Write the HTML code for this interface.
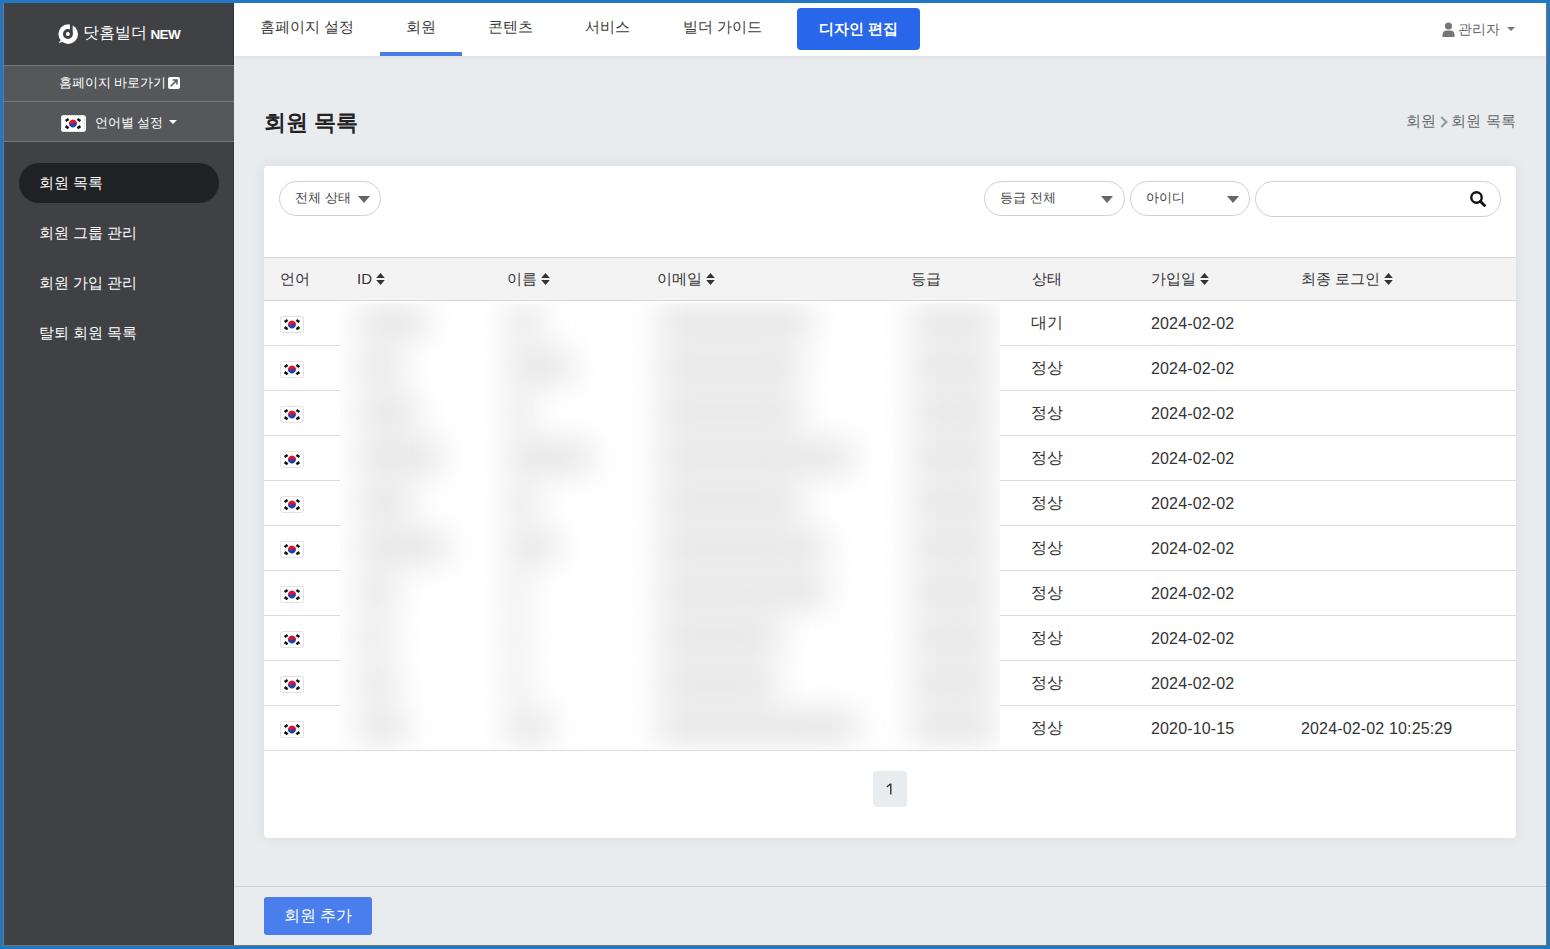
<!DOCTYPE html>
<html><head><meta charset="utf-8">
<style>
*{box-sizing:border-box;margin:0;padding:0}
html,body{width:1550px;height:949px;overflow:hidden;background:#1f78c1;font-family:"Liberation Sans",sans-serif;}
.abs{position:absolute;white-space:nowrap}
#win{position:absolute;left:3px;top:3px;width:1544px;height:943px;background:#e9ecef;overflow:hidden;border-right:1px solid #77736f;border-bottom:1px solid #77736f}
#side{position:absolute;left:0;top:0;width:231px;height:943px;background:#404145;border-left:1px solid #7b7570;border-right:1px solid #333438}
#main{position:absolute;left:231px;top:0;width:1313px;height:943px}
#nav{position:absolute;left:231px;top:0;width:1312px;height:53px;background:#fff;box-shadow:0 1px 5px rgba(0,0,0,0.06)}
.nv{font-size:15px;line-height:20px;color:#3a3a3a;top:13.5px}
.mi{font-size:15px;line-height:20px;color:#fff;left:35px}
.pill{border:1px solid #d0d0d0;border-radius:18px;background:#fff}
.ft{font-size:13px;line-height:20px;color:#444}
.th{font-size:15px;line-height:20px;color:#333}
.td{font-size:16px;line-height:20px;color:#333}
.dt{letter-spacing:0.15px}
.sort{display:inline-block;margin-left:4px;vertical-align:-1px}
</style></head>
<body>
<div id="win">
  <div id="side">
    <div class="abs" style="left:54px;top:21px;width:21px;height:21px">
      <svg width="21" height="21" viewBox="0 0 21 21"><circle cx="10.2" cy="10.1" r="9.8" fill="#fff"/><path d="M3.2 15.5 L0.6 19 L5.4 17.8Z" fill="#fff"/><circle cx="9.9" cy="10" r="3.5" fill="none" stroke="#404145" stroke-width="2.9"/><rect x="11.9" y="0" width="2.8" height="10.5" fill="#404145"/></svg>
    </div>
    <div class="abs" style="left:79px;top:20px;font-size:16px;line-height:20px;color:#fff">닷홈빌더 <span style="font-size:13.5px;font-weight:bold;letter-spacing:-0.6px;vertical-align:-1px;margin-left:-1px">NEW</span></div>
    <div class="abs" style="left:0;top:62px;width:230px;height:77px;background:#56575b;border-top:1px solid #77787b;border-bottom:1px solid #77787b"></div>
    <div class="abs" style="left:0;top:98px;width:230px;height:1px;background:#77787b"></div>
    <div class="abs" style="left:55px;top:70px;font-size:12.5px;line-height:20px;color:#fff">홈페이지 바로가기</div>
    <div class="abs" style="left:164px;top:74px;width:12px;height:12px;background:#fff;border-radius:2px"><svg width="12" height="12" style="position:absolute;left:0;top:0"><path d="M2.8 9.2 L8.6 3.4 M4.6 3 H9 V7.4" stroke="#56575b" stroke-width="1.5" fill="none"/></svg></div>
    <div class="abs" style="left:57px;top:112px;width:25px;height:17px;background:#fff;border-radius:3px;overflow:hidden"><svg width="24" height="17" viewBox="0 0 24 17"><rect x="0.5" y="0.5" width="23" height="16" rx="2" fill="#fff" stroke="#e2e2e2"/>
<g transform="rotate(33.7 12 8.5)"><path d="M8.2 8.5 A3.8 3.8 0 0 1 15.8 8.5 Z" fill="#e8102a"/><path d="M8.2 8.5 A3.8 3.8 0 0 0 15.8 8.5 Z" fill="#1747b5"/><circle cx="10.1" cy="8.5" r="1.9" fill="#e8102a"/><circle cx="13.9" cy="8.5" r="1.9" fill="#1747b5"/></g>
<g fill="#111"><rect x="4.8" y="3.2" width="2.6" height="3.6" transform="rotate(56 6.1 5)"/><rect x="16.6" y="3.2" width="2.6" height="3.6" transform="rotate(-56 17.9 5)"/><rect x="4.8" y="10.4" width="2.6" height="3.6" transform="rotate(-56 6.1 12.2)"/><rect x="16.6" y="10.4" width="2.6" height="3.6" transform="rotate(56 17.9 12.2)"/></g></svg></div>
    <div class="abs" style="left:91px;top:110px;font-size:12.5px;line-height:20px;color:#fff">언어별 설정</div>
    <svg class="abs" style="left:165px;top:117px" width="8" height="4" viewBox="0 0 8 4"><path d="M0 0H8L4.0 4Z" fill="#fff"/></svg>
    <div class="abs" style="left:15px;top:160px;width:200px;height:40px;border-radius:20px;background:#202124"></div>
    <div class="abs mi" style="top:170px">회원 목록</div>
    <div class="abs mi" style="top:220px">회원 그룹 관리</div>
    <div class="abs mi" style="top:270px">회원 가입 관리</div>
    <div class="abs mi" style="top:320px">탈퇴 회원 목록</div>
  </div>
  <div id="main">
    <div class="abs" style="left:30px;top:105px;font-size:22px;line-height:30px;font-weight:bold;color:#222">회원 목록</div>
    <div class="abs" style="left:1172px;top:108px;font-size:15px;line-height:20px;color:#666">회원 <span style="display:inline-block;width:8px;height:8px;border-right:2px solid #9a9a9a;border-top:2px solid #9a9a9a;transform:rotate(45deg);margin:0 1px 0 -2px;vertical-align:0px"></span> 회원 목록</div>
    <div id="card" class="abs" style="left:30px;top:163px;width:1252px;height:672px;background:#fff;border-radius:4px;box-shadow:0 0 14px rgba(0,0,0,0.07)">
<div class="abs pill" style="left:15px;top:15px;width:102px;height:35px"><span class="abs ft" style="left:15px;top:6px">전체 상태</span><svg class="abs" style="left:78px;top:14px" width="12" height="7" viewBox="0 0 12 7"><path d="M0 0H12L6.0 7Z" fill="#666"/></svg></div>
<div class="abs pill" style="left:720px;top:15px;width:141px;height:35px"><span class="abs ft" style="left:15px;top:6px">등급 전체</span><svg class="abs" style="left:116px;top:14px" width="12" height="7" viewBox="0 0 12 7"><path d="M0 0H12L6.0 7Z" fill="#666"/></svg></div>
<div class="abs pill" style="left:866px;top:15px;width:120px;height:35px"><span class="abs ft" style="left:15px;top:6px">아이디</span><svg class="abs" style="left:96px;top:14px" width="12" height="7" viewBox="0 0 12 7"><path d="M0 0H12L6.0 7Z" fill="#666"/></svg></div>
<div class="abs pill" style="left:991px;top:15px;width:246px;height:36px"><svg class="abs" style="left:213px;top:8px" width="18" height="18" viewBox="0 0 18 18"><circle cx="7.5" cy="7.5" r="5.2" fill="none" stroke="#111" stroke-width="2.4"/><path d="M11.3 11.3 L15.5 15.5" stroke="#111" stroke-width="2.8" stroke-linecap="round"/></svg></div>
<div class="abs" style="left:0;top:91px;width:1252px;height:44px;background:#f3f3f3;border-top:1px solid #d6d6d6;border-bottom:1px solid #d6d6d6"></div>
<div class="abs th" style="left:16px;top:103px">언어</div>
<div class="abs th" style="left:93px;top:103px">ID<svg class="sort" width="9" height="12" viewBox="0 0 9 12"><path d="M4.5 0 L8.8 4.9 H0.2Z M0.2 7 H8.8 L4.5 12Z" fill="#333"/></svg></div>
<div class="abs th" style="left:243px;top:103px">이름<svg class="sort" width="9" height="12" viewBox="0 0 9 12"><path d="M4.5 0 L8.8 4.9 H0.2Z M0.2 7 H8.8 L4.5 12Z" fill="#333"/></svg></div>
<div class="abs th" style="left:393px;top:103px">이메일<svg class="sort" width="9" height="12" viewBox="0 0 9 12"><path d="M4.5 0 L8.8 4.9 H0.2Z M0.2 7 H8.8 L4.5 12Z" fill="#333"/></svg></div>
<div class="abs th" style="left:647px;top:103px">등급</div>
<div class="abs th" style="left:768px;top:103px">상태</div>
<div class="abs th" style="left:887px;top:103px">가입일<svg class="sort" width="9" height="12" viewBox="0 0 9 12"><path d="M4.5 0 L8.8 4.9 H0.2Z M0.2 7 H8.8 L4.5 12Z" fill="#333"/></svg></div>
<div class="abs th" style="left:1037px;top:103px">최종 로그인<svg class="sort" width="9" height="12" viewBox="0 0 9 12"><path d="M4.5 0 L8.8 4.9 H0.2Z M0.2 7 H8.8 L4.5 12Z" fill="#333"/></svg></div>
<div class="abs" style="left:16px;top:150px;width:24px;height:17px"><svg width="24" height="17" viewBox="0 0 24 17"><rect x="0.5" y="0.5" width="23" height="16" rx="2" fill="#fff" stroke="#e2e2e2"/>
<g transform="rotate(33.7 12 8.5)"><path d="M8.2 8.5 A3.8 3.8 0 0 1 15.8 8.5 Z" fill="#e8102a"/><path d="M8.2 8.5 A3.8 3.8 0 0 0 15.8 8.5 Z" fill="#1747b5"/><circle cx="10.1" cy="8.5" r="1.9" fill="#e8102a"/><circle cx="13.9" cy="8.5" r="1.9" fill="#1747b5"/></g>
<g fill="#111"><rect x="4.8" y="3.2" width="2.6" height="3.6" transform="rotate(56 6.1 5)"/><rect x="16.6" y="3.2" width="2.6" height="3.6" transform="rotate(-56 17.9 5)"/><rect x="4.8" y="10.4" width="2.6" height="3.6" transform="rotate(-56 6.1 12.2)"/><rect x="16.6" y="10.4" width="2.6" height="3.6" transform="rotate(56 17.9 12.2)"/></g></svg></div>
<div class="abs td" style="left:767px;top:147px">대기</div>
<div class="abs td dt" style="left:887px;top:148px">2024-02-02</div>
<div class="abs" style="left:0;width:1252px;top:179px;height:1px;background:#dcdcdc"></div>
<div class="abs" style="left:16px;top:195px;width:24px;height:17px"><svg width="24" height="17" viewBox="0 0 24 17"><rect x="0.5" y="0.5" width="23" height="16" rx="2" fill="#fff" stroke="#e2e2e2"/>
<g transform="rotate(33.7 12 8.5)"><path d="M8.2 8.5 A3.8 3.8 0 0 1 15.8 8.5 Z" fill="#e8102a"/><path d="M8.2 8.5 A3.8 3.8 0 0 0 15.8 8.5 Z" fill="#1747b5"/><circle cx="10.1" cy="8.5" r="1.9" fill="#e8102a"/><circle cx="13.9" cy="8.5" r="1.9" fill="#1747b5"/></g>
<g fill="#111"><rect x="4.8" y="3.2" width="2.6" height="3.6" transform="rotate(56 6.1 5)"/><rect x="16.6" y="3.2" width="2.6" height="3.6" transform="rotate(-56 17.9 5)"/><rect x="4.8" y="10.4" width="2.6" height="3.6" transform="rotate(-56 6.1 12.2)"/><rect x="16.6" y="10.4" width="2.6" height="3.6" transform="rotate(56 17.9 12.2)"/></g></svg></div>
<div class="abs td" style="left:767px;top:192px">정상</div>
<div class="abs td dt" style="left:887px;top:193px">2024-02-02</div>
<div class="abs" style="left:0;width:1252px;top:224px;height:1px;background:#dcdcdc"></div>
<div class="abs" style="left:16px;top:240px;width:24px;height:17px"><svg width="24" height="17" viewBox="0 0 24 17"><rect x="0.5" y="0.5" width="23" height="16" rx="2" fill="#fff" stroke="#e2e2e2"/>
<g transform="rotate(33.7 12 8.5)"><path d="M8.2 8.5 A3.8 3.8 0 0 1 15.8 8.5 Z" fill="#e8102a"/><path d="M8.2 8.5 A3.8 3.8 0 0 0 15.8 8.5 Z" fill="#1747b5"/><circle cx="10.1" cy="8.5" r="1.9" fill="#e8102a"/><circle cx="13.9" cy="8.5" r="1.9" fill="#1747b5"/></g>
<g fill="#111"><rect x="4.8" y="3.2" width="2.6" height="3.6" transform="rotate(56 6.1 5)"/><rect x="16.6" y="3.2" width="2.6" height="3.6" transform="rotate(-56 17.9 5)"/><rect x="4.8" y="10.4" width="2.6" height="3.6" transform="rotate(-56 6.1 12.2)"/><rect x="16.6" y="10.4" width="2.6" height="3.6" transform="rotate(56 17.9 12.2)"/></g></svg></div>
<div class="abs td" style="left:767px;top:237px">정상</div>
<div class="abs td dt" style="left:887px;top:238px">2024-02-02</div>
<div class="abs" style="left:0;width:1252px;top:269px;height:1px;background:#dcdcdc"></div>
<div class="abs" style="left:16px;top:285px;width:24px;height:17px"><svg width="24" height="17" viewBox="0 0 24 17"><rect x="0.5" y="0.5" width="23" height="16" rx="2" fill="#fff" stroke="#e2e2e2"/>
<g transform="rotate(33.7 12 8.5)"><path d="M8.2 8.5 A3.8 3.8 0 0 1 15.8 8.5 Z" fill="#e8102a"/><path d="M8.2 8.5 A3.8 3.8 0 0 0 15.8 8.5 Z" fill="#1747b5"/><circle cx="10.1" cy="8.5" r="1.9" fill="#e8102a"/><circle cx="13.9" cy="8.5" r="1.9" fill="#1747b5"/></g>
<g fill="#111"><rect x="4.8" y="3.2" width="2.6" height="3.6" transform="rotate(56 6.1 5)"/><rect x="16.6" y="3.2" width="2.6" height="3.6" transform="rotate(-56 17.9 5)"/><rect x="4.8" y="10.4" width="2.6" height="3.6" transform="rotate(-56 6.1 12.2)"/><rect x="16.6" y="10.4" width="2.6" height="3.6" transform="rotate(56 17.9 12.2)"/></g></svg></div>
<div class="abs td" style="left:767px;top:282px">정상</div>
<div class="abs td dt" style="left:887px;top:283px">2024-02-02</div>
<div class="abs" style="left:0;width:1252px;top:314px;height:1px;background:#dcdcdc"></div>
<div class="abs" style="left:16px;top:330px;width:24px;height:17px"><svg width="24" height="17" viewBox="0 0 24 17"><rect x="0.5" y="0.5" width="23" height="16" rx="2" fill="#fff" stroke="#e2e2e2"/>
<g transform="rotate(33.7 12 8.5)"><path d="M8.2 8.5 A3.8 3.8 0 0 1 15.8 8.5 Z" fill="#e8102a"/><path d="M8.2 8.5 A3.8 3.8 0 0 0 15.8 8.5 Z" fill="#1747b5"/><circle cx="10.1" cy="8.5" r="1.9" fill="#e8102a"/><circle cx="13.9" cy="8.5" r="1.9" fill="#1747b5"/></g>
<g fill="#111"><rect x="4.8" y="3.2" width="2.6" height="3.6" transform="rotate(56 6.1 5)"/><rect x="16.6" y="3.2" width="2.6" height="3.6" transform="rotate(-56 17.9 5)"/><rect x="4.8" y="10.4" width="2.6" height="3.6" transform="rotate(-56 6.1 12.2)"/><rect x="16.6" y="10.4" width="2.6" height="3.6" transform="rotate(56 17.9 12.2)"/></g></svg></div>
<div class="abs td" style="left:767px;top:327px">정상</div>
<div class="abs td dt" style="left:887px;top:328px">2024-02-02</div>
<div class="abs" style="left:0;width:1252px;top:359px;height:1px;background:#dcdcdc"></div>
<div class="abs" style="left:16px;top:375px;width:24px;height:17px"><svg width="24" height="17" viewBox="0 0 24 17"><rect x="0.5" y="0.5" width="23" height="16" rx="2" fill="#fff" stroke="#e2e2e2"/>
<g transform="rotate(33.7 12 8.5)"><path d="M8.2 8.5 A3.8 3.8 0 0 1 15.8 8.5 Z" fill="#e8102a"/><path d="M8.2 8.5 A3.8 3.8 0 0 0 15.8 8.5 Z" fill="#1747b5"/><circle cx="10.1" cy="8.5" r="1.9" fill="#e8102a"/><circle cx="13.9" cy="8.5" r="1.9" fill="#1747b5"/></g>
<g fill="#111"><rect x="4.8" y="3.2" width="2.6" height="3.6" transform="rotate(56 6.1 5)"/><rect x="16.6" y="3.2" width="2.6" height="3.6" transform="rotate(-56 17.9 5)"/><rect x="4.8" y="10.4" width="2.6" height="3.6" transform="rotate(-56 6.1 12.2)"/><rect x="16.6" y="10.4" width="2.6" height="3.6" transform="rotate(56 17.9 12.2)"/></g></svg></div>
<div class="abs td" style="left:767px;top:372px">정상</div>
<div class="abs td dt" style="left:887px;top:373px">2024-02-02</div>
<div class="abs" style="left:0;width:1252px;top:404px;height:1px;background:#dcdcdc"></div>
<div class="abs" style="left:16px;top:420px;width:24px;height:17px"><svg width="24" height="17" viewBox="0 0 24 17"><rect x="0.5" y="0.5" width="23" height="16" rx="2" fill="#fff" stroke="#e2e2e2"/>
<g transform="rotate(33.7 12 8.5)"><path d="M8.2 8.5 A3.8 3.8 0 0 1 15.8 8.5 Z" fill="#e8102a"/><path d="M8.2 8.5 A3.8 3.8 0 0 0 15.8 8.5 Z" fill="#1747b5"/><circle cx="10.1" cy="8.5" r="1.9" fill="#e8102a"/><circle cx="13.9" cy="8.5" r="1.9" fill="#1747b5"/></g>
<g fill="#111"><rect x="4.8" y="3.2" width="2.6" height="3.6" transform="rotate(56 6.1 5)"/><rect x="16.6" y="3.2" width="2.6" height="3.6" transform="rotate(-56 17.9 5)"/><rect x="4.8" y="10.4" width="2.6" height="3.6" transform="rotate(-56 6.1 12.2)"/><rect x="16.6" y="10.4" width="2.6" height="3.6" transform="rotate(56 17.9 12.2)"/></g></svg></div>
<div class="abs td" style="left:767px;top:417px">정상</div>
<div class="abs td dt" style="left:887px;top:418px">2024-02-02</div>
<div class="abs" style="left:0;width:1252px;top:449px;height:1px;background:#dcdcdc"></div>
<div class="abs" style="left:16px;top:465px;width:24px;height:17px"><svg width="24" height="17" viewBox="0 0 24 17"><rect x="0.5" y="0.5" width="23" height="16" rx="2" fill="#fff" stroke="#e2e2e2"/>
<g transform="rotate(33.7 12 8.5)"><path d="M8.2 8.5 A3.8 3.8 0 0 1 15.8 8.5 Z" fill="#e8102a"/><path d="M8.2 8.5 A3.8 3.8 0 0 0 15.8 8.5 Z" fill="#1747b5"/><circle cx="10.1" cy="8.5" r="1.9" fill="#e8102a"/><circle cx="13.9" cy="8.5" r="1.9" fill="#1747b5"/></g>
<g fill="#111"><rect x="4.8" y="3.2" width="2.6" height="3.6" transform="rotate(56 6.1 5)"/><rect x="16.6" y="3.2" width="2.6" height="3.6" transform="rotate(-56 17.9 5)"/><rect x="4.8" y="10.4" width="2.6" height="3.6" transform="rotate(-56 6.1 12.2)"/><rect x="16.6" y="10.4" width="2.6" height="3.6" transform="rotate(56 17.9 12.2)"/></g></svg></div>
<div class="abs td" style="left:767px;top:462px">정상</div>
<div class="abs td dt" style="left:887px;top:463px">2024-02-02</div>
<div class="abs" style="left:0;width:1252px;top:494px;height:1px;background:#dcdcdc"></div>
<div class="abs" style="left:16px;top:510px;width:24px;height:17px"><svg width="24" height="17" viewBox="0 0 24 17"><rect x="0.5" y="0.5" width="23" height="16" rx="2" fill="#fff" stroke="#e2e2e2"/>
<g transform="rotate(33.7 12 8.5)"><path d="M8.2 8.5 A3.8 3.8 0 0 1 15.8 8.5 Z" fill="#e8102a"/><path d="M8.2 8.5 A3.8 3.8 0 0 0 15.8 8.5 Z" fill="#1747b5"/><circle cx="10.1" cy="8.5" r="1.9" fill="#e8102a"/><circle cx="13.9" cy="8.5" r="1.9" fill="#1747b5"/></g>
<g fill="#111"><rect x="4.8" y="3.2" width="2.6" height="3.6" transform="rotate(56 6.1 5)"/><rect x="16.6" y="3.2" width="2.6" height="3.6" transform="rotate(-56 17.9 5)"/><rect x="4.8" y="10.4" width="2.6" height="3.6" transform="rotate(-56 6.1 12.2)"/><rect x="16.6" y="10.4" width="2.6" height="3.6" transform="rotate(56 17.9 12.2)"/></g></svg></div>
<div class="abs td" style="left:767px;top:507px">정상</div>
<div class="abs td dt" style="left:887px;top:508px">2024-02-02</div>
<div class="abs" style="left:0;width:1252px;top:539px;height:1px;background:#dcdcdc"></div>
<div class="abs" style="left:16px;top:555px;width:24px;height:17px"><svg width="24" height="17" viewBox="0 0 24 17"><rect x="0.5" y="0.5" width="23" height="16" rx="2" fill="#fff" stroke="#e2e2e2"/>
<g transform="rotate(33.7 12 8.5)"><path d="M8.2 8.5 A3.8 3.8 0 0 1 15.8 8.5 Z" fill="#e8102a"/><path d="M8.2 8.5 A3.8 3.8 0 0 0 15.8 8.5 Z" fill="#1747b5"/><circle cx="10.1" cy="8.5" r="1.9" fill="#e8102a"/><circle cx="13.9" cy="8.5" r="1.9" fill="#1747b5"/></g>
<g fill="#111"><rect x="4.8" y="3.2" width="2.6" height="3.6" transform="rotate(56 6.1 5)"/><rect x="16.6" y="3.2" width="2.6" height="3.6" transform="rotate(-56 17.9 5)"/><rect x="4.8" y="10.4" width="2.6" height="3.6" transform="rotate(-56 6.1 12.2)"/><rect x="16.6" y="10.4" width="2.6" height="3.6" transform="rotate(56 17.9 12.2)"/></g></svg></div>
<div class="abs td" style="left:767px;top:552px">정상</div>
<div class="abs td dt" style="left:887px;top:553px">2020-10-15</div>
<div class="abs td dt" style="left:1037px;top:553px">2024-02-02 10:25:29</div>
<div class="abs" style="left:0;width:1252px;top:584px;height:1px;background:#dcdcdc"></div>
<div class="abs" style="left:76px;top:137px;width:660px;height:447px;background:#fff;overflow:hidden" id="blur"><div class="abs" style="left:0;top:-2px;width:660px;height:449px;filter:blur(16px)"><div class="abs" style="left:17px;top:6px;width:70px;height:30px;background:#e2e2e2"></div><div class="abs" style="left:17px;top:51px;width:45px;height:30px;background:#e2e2e2"></div><div class="abs" style="left:17px;top:96px;width:60px;height:30px;background:#e2e2e2"></div><div class="abs" style="left:17px;top:141px;width:85px;height:30px;background:#e2e2e2"></div><div class="abs" style="left:17px;top:186px;width:55px;height:30px;background:#e2e2e2"></div><div class="abs" style="left:17px;top:231px;width:90px;height:30px;background:#e2e2e2"></div><div class="abs" style="left:17px;top:276px;width:40px;height:30px;background:#e2e2e2"></div><div class="abs" style="left:17px;top:321px;width:35px;height:30px;background:#e2e2e2"></div><div class="abs" style="left:17px;top:366px;width:40px;height:30px;background:#e2e2e2"></div><div class="abs" style="left:17px;top:411px;width:50px;height:30px;background:#e2e2e2"></div><div class="abs" style="left:167px;top:6px;width:35px;height:30px;background:#e2e2e2"></div><div class="abs" style="left:167px;top:51px;width:65px;height:30px;background:#e2e2e2"></div><div class="abs" style="left:167px;top:96px;width:25px;height:30px;background:#e2e2e2"></div><div class="abs" style="left:167px;top:141px;width:85px;height:30px;background:#e2e2e2"></div><div class="abs" style="left:167px;top:186px;width:30px;height:30px;background:#e2e2e2"></div><div class="abs" style="left:167px;top:231px;width:50px;height:30px;background:#e2e2e2"></div><div class="abs" style="left:167px;top:276px;width:20px;height:30px;background:#e2e2e2"></div><div class="abs" style="left:167px;top:321px;width:20px;height:30px;background:#e2e2e2"></div><div class="abs" style="left:167px;top:366px;width:20px;height:30px;background:#e2e2e2"></div><div class="abs" style="left:167px;top:411px;width:45px;height:30px;background:#e2e2e2"></div><div class="abs" style="left:317px;top:6px;width:155px;height:30px;background:#e2e2e2"></div><div class="abs" style="left:317px;top:51px;width:145px;height:30px;background:#e2e2e2"></div><div class="abs" style="left:317px;top:96px;width:145px;height:30px;background:#e2e2e2"></div><div class="abs" style="left:317px;top:141px;width:195px;height:30px;background:#e2e2e2"></div><div class="abs" style="left:317px;top:186px;width:145px;height:30px;background:#e2e2e2"></div><div class="abs" style="left:317px;top:231px;width:170px;height:30px;background:#e2e2e2"></div><div class="abs" style="left:317px;top:276px;width:170px;height:30px;background:#e2e2e2"></div><div class="abs" style="left:317px;top:321px;width:125px;height:30px;background:#e2e2e2"></div><div class="abs" style="left:317px;top:366px;width:120px;height:30px;background:#e2e2e2"></div><div class="abs" style="left:317px;top:411px;width:200px;height:30px;background:#e2e2e2"></div><div class="abs" style="left:571px;top:6px;width:85px;height:30px;background:#e2e2e2"></div><div class="abs" style="left:571px;top:51px;width:85px;height:30px;background:#e2e2e2"></div><div class="abs" style="left:571px;top:96px;width:85px;height:30px;background:#e2e2e2"></div><div class="abs" style="left:571px;top:141px;width:85px;height:30px;background:#e2e2e2"></div><div class="abs" style="left:571px;top:186px;width:85px;height:30px;background:#e2e2e2"></div><div class="abs" style="left:571px;top:231px;width:85px;height:30px;background:#e2e2e2"></div><div class="abs" style="left:571px;top:276px;width:85px;height:30px;background:#e2e2e2"></div><div class="abs" style="left:571px;top:321px;width:85px;height:30px;background:#e2e2e2"></div><div class="abs" style="left:571px;top:366px;width:85px;height:30px;background:#e2e2e2"></div><div class="abs" style="left:571px;top:411px;width:85px;height:30px;background:#e2e2e2"></div></div></div>
<div class="abs" style="left:609px;top:605px;width:34px;height:36px;border-radius:4px;background:#e9ecef"><svg class="abs" style="left:13px;top:12px" width="7" height="12" viewBox="0 0 7 12"><path d="M4.1 0.4 H5.5 V11.6 H4.1 V2.3 L1.2 4.4 L0.5 3.3Z" fill="#333"/></svg></div>
    </div>
    <div class="abs" style="left:0;top:883px;width:1313px;height:1px;background:#d3d3d3"></div>
    <div class="abs" style="left:30px;top:894px;width:108px;height:38px;border-radius:3px;background:#4a7eec;color:#fff;font-size:16px;line-height:38px;text-align:center">회원 추가</div>
  </div>
  <div id="nav">
    <div class="abs nv" style="left:26px">홈페이지 설정</div>
    <div class="abs nv" style="left:172px">회원</div>
    <div class="abs" style="left:146px;top:49px;width:82px;height:4px;background:#4a7be6"></div>
    <div class="abs nv" style="left:254px">콘텐츠</div>
    <div class="abs nv" style="left:351px">서비스</div>
    <div class="abs nv" style="left:449px">빌더 가이드</div>
    <div class="abs" style="left:563px;top:5px;width:123px;height:42px;border-radius:4px;background:#2866ea;color:#fff;font-size:15px;font-weight:bold;line-height:42px;text-align:center">디자인 편집</div>
    <svg class="abs" style="left:1208px;top:19px" width="13" height="15" viewBox="0 0 13 15"><circle cx="6.5" cy="4" r="3.6" fill="#777"/><path d="M0.5 15 V12.5 C0.5 10 2.5 8.6 4.5 8.6 H8.5 C10.5 8.6 12.5 10 12.5 12.5 V15Z" fill="#777"/></svg>
    <div class="abs" style="left:1224px;top:16px;font-size:14px;line-height:20px;color:#666">관리자</div>
    <svg class="abs" style="left:1273px;top:24px" width="8" height="4" viewBox="0 0 8 4"><path d="M0 0H8L4.0 4Z" fill="#777"/></svg>
  </div>
</div>
</body></html>
